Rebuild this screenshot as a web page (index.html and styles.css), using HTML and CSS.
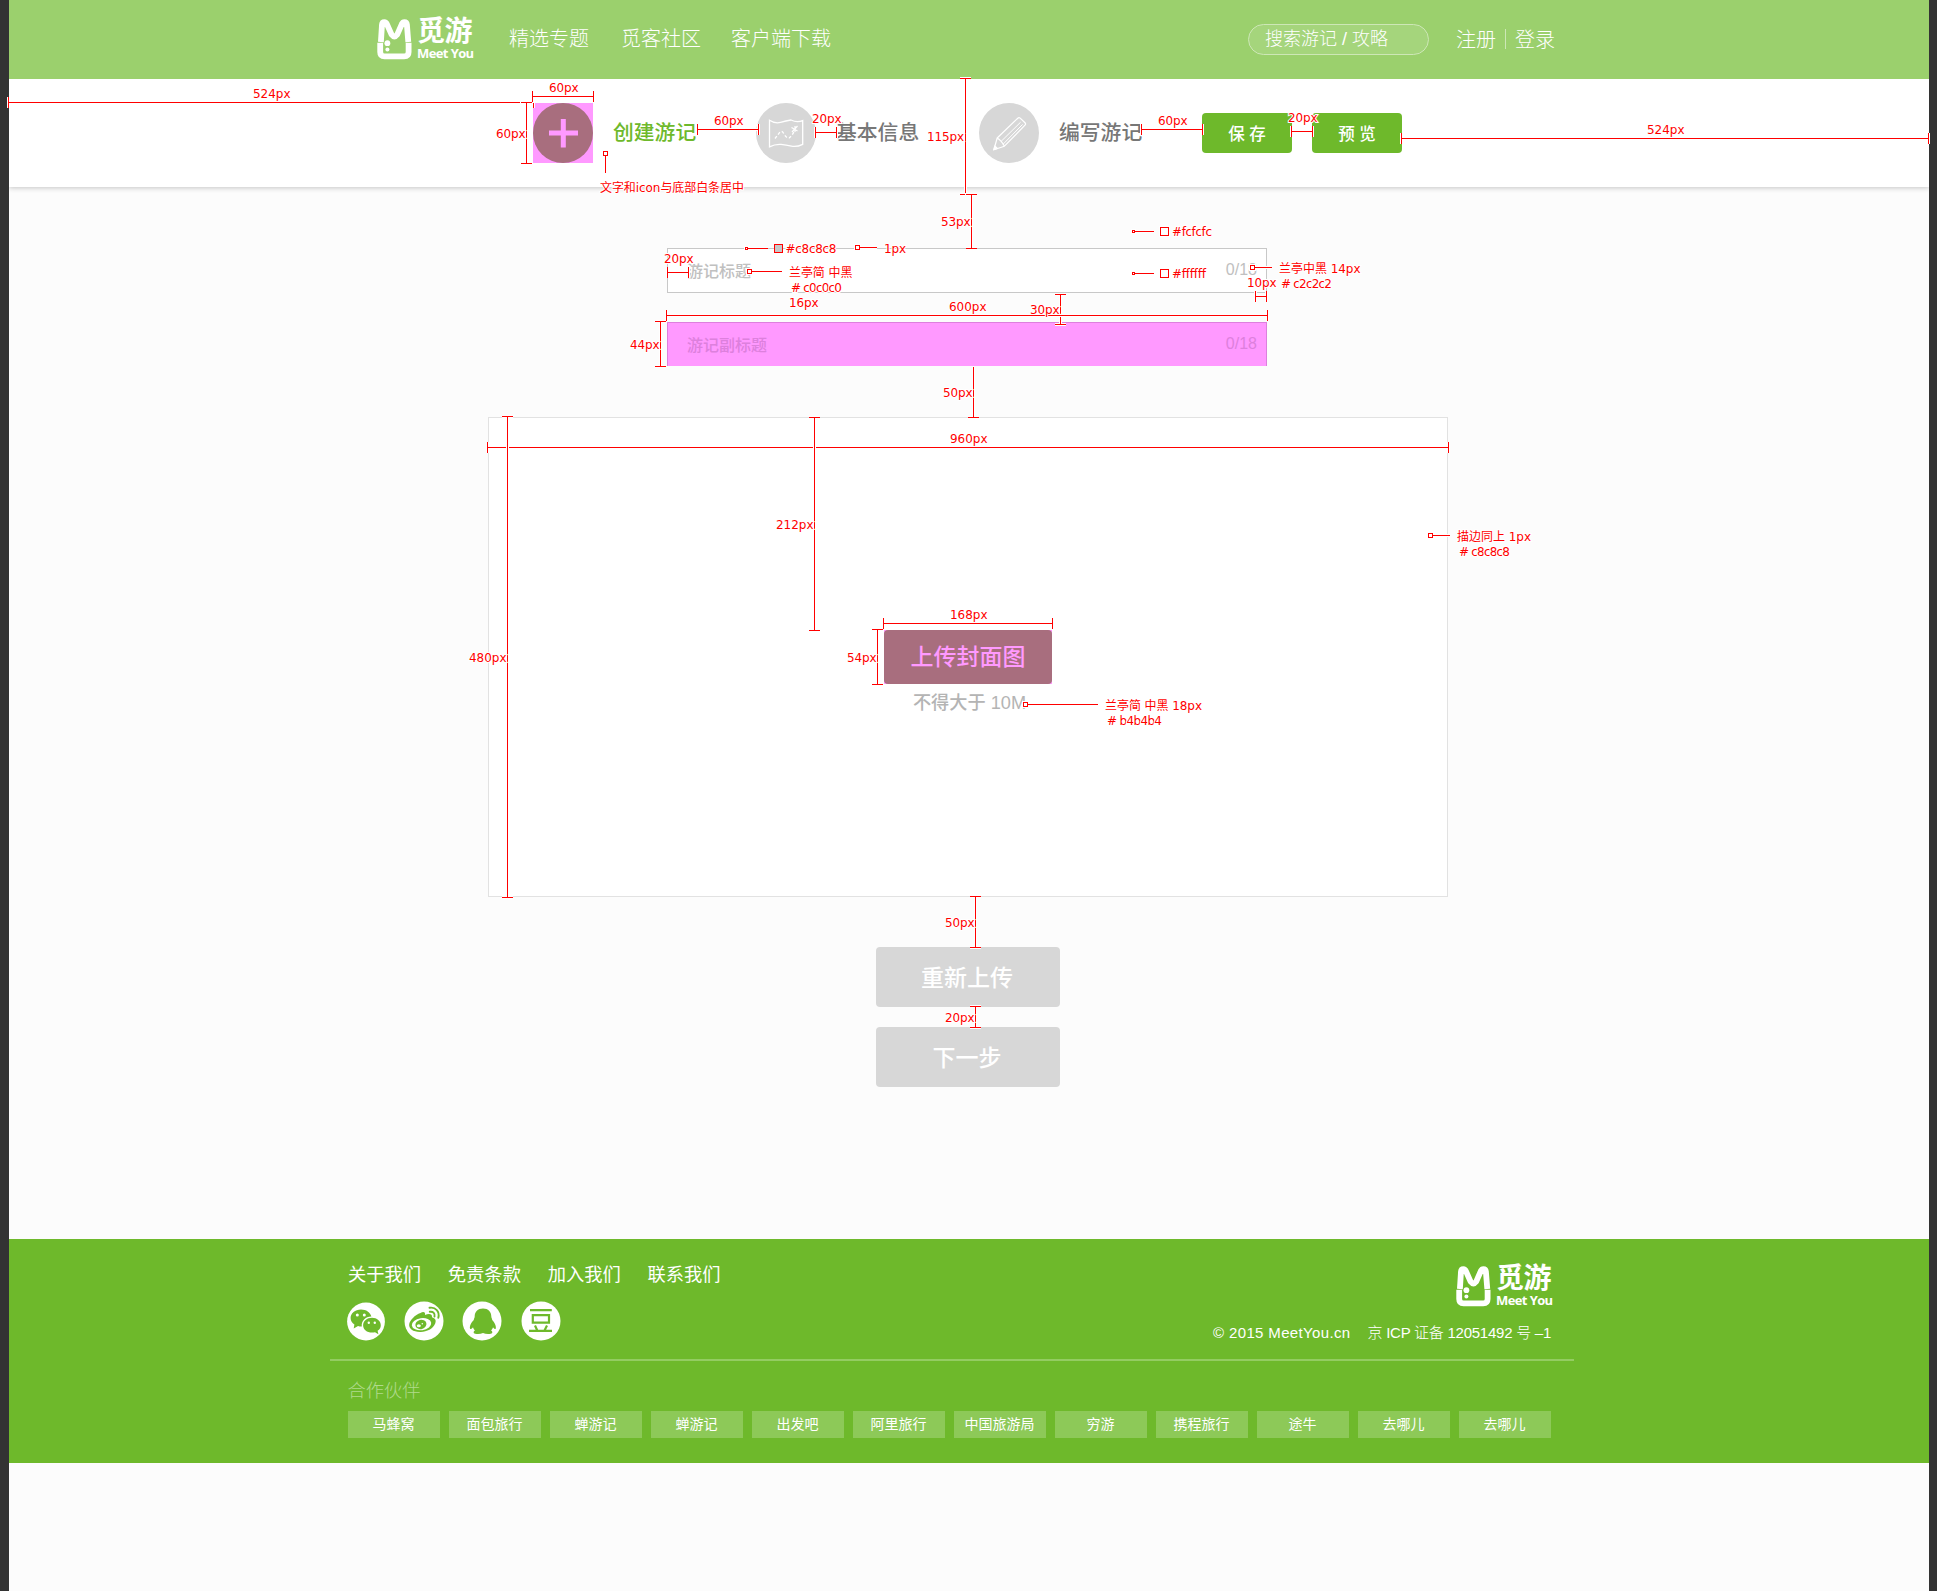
FILE: index.html
```html
<!DOCTYPE html>
<html lang="zh-CN">
<head>
<meta charset="utf-8">
<title>觅游 - 创建游记</title>
<link rel="stylesheet" href="styles.css">
</head>
<body>
<svg class="defs" width="0" height="0">
  <symbol id="logo-mark" viewBox="0 0 35 41">
    <g fill="none" stroke="#fff">
      <path stroke-width="5.8" d="M3.9 23 5 5.5Q5.200 3.100 7.400 3.100 9 3.100 9.800 4.900L14.600 15.600Q17.400 19.400 20.200 15.600L24.900 4.900Q25.800 3.100 27.400 3.100 29.600 3.100 29.900 5.500L31.300 23"/>
      <path stroke-width="5.800" d="M3.200 23.800V33Q3.200 37.400 7.600 37.400H27.200Q31.600 37.400 31.600 33V23.800"/>
    </g>
    <circle cx="10.400" cy="24.200" r="2.900" fill="#fff"/><circle cx="10.400" cy="30.400" r="2" fill="#fff"/>
  </symbol>
</svg>
<div class="page">
  <header class="header">
    <div class="logo">
      <svg width="35" height="41"><use href="#logo-mark"/></svg>
      <div class="logo-words"><span class="logo-cn">觅游</span><span class="logo-en">Meet You</span></div>
    </div>
    <nav class="nav"><a>精选专题</a><a>觅客社区</a><a>客户端下载</a></nav>
    <div class="search">搜索游记 / 攻略</div>
    <div class="account"><a>注册</a><i></i><a>登录</a></div>
  </header>

  <section class="steps">
    <div class="step active">
      <div class="step-icon"><svg width="60" height="60"><circle cx="30" cy="30" r="30" fill="#a86e7e"/><path d="M16 30H45M30.300 16V44.500" stroke="#ff99ff" stroke-width="5"/></svg></div>
      <span>创建游记</span>
    </div>
    <div class="step info">
      <svg width="60" height="60" fill="none" stroke="#fff"><circle cx="30" cy="30" r="30" fill="#d7d7d7" stroke="none"/>
        <path stroke-width="1.300" d="M13.500 17.200Q19 20.800 24.500 19.400T35 17Q41 20 46.700 17.600V41.300Q41 44.200 35.500 43.200T25 41.400Q19 41 13.500 43.800Z"/>
        <path stroke-width="1.300" stroke-dasharray="3 2" d="M19 35.500 24 29Q26 27 28 31T33 35Q36 33 39 27"/>
        <path stroke-width="1.200" d="M35.500 24.500 41.500 28M41.500 23 36 29M39 23V29"/></svg>
      <span>基本信息</span>
    </div>
    <div class="step write">
      <svg width="60" height="60" fill="none" stroke="#fff" stroke-width="1.200" stroke-linejoin="round"><circle cx="30" cy="30" r="30" fill="#d7d7d7" stroke="none"/>
        <path d="M18.200 35 38.800 15.200Q40 14 41.200 15.200L46 19.800Q47.200 21 46 22.200L25.400 43.200 14.800 46.800ZM18.200 35Q22.500 37.500 25.400 43.200"/>
        <path stroke-width="1" d="M22 38.500 41.600 19.200M24 41.300 43.600 21.400"/>
        <path fill="#fff" d="M15.800 43 14.800 46.800 18.400 45.500Z"/></svg>
      <span>编写游记</span>
    </div>
    <div class="actions"><button>保 存</button><button>预 览</button></div>
  </section>

  <main class="editor">
    <div class="field"><span>游记标题</span><em>0/18</em></div>
    <div class="field sub"><span>游记副标题</span><em>0/18</em></div>
    <div class="cover">
      <div class="upload-box"><button class="upload">上传封面图</button></div>
      <p>不得大于 10M</p>
    </div>
    <button class="big">重新上传</button>
    <button class="big">下一步</button>
  </main>

  <footer class="footer">
    <div class="footer-top">
      <div>
        <div class="links"><a>关于我们</a><a>免责条款</a><a>加入我们</a><a>联系我们</a></div>
        <div class="social">
          <svg width="40" height="40" viewBox="0 0 40 40"><circle cx="20" cy="20.500" r="18.900" fill="#fff"/>
            <path fill="#6eb92b" d="M15 8.500C9 8.500 4.600 12.300 4.600 17c0 2.800 1.500 5 3.800 6.600L7.700 27.500l4.300-2.600c1.200.4 2.300.5 3.800.5C15.200 20 19.500 15.400 25.400 15.500 24.300 11.300 20.200 8.500 15 8.500Z"/>
            <path fill="#6eb92b" d="M26 16.800c-5 0-8.900 3.300-8.900 7.400s3.900 7.400 8.900 7.400c1 0 2-.1 3-.4l3.400 2-.8-3.400c2-1.400 3.200-3.300 3.200-5.600 0-4.100-3.900-7.400-8.800-7.400Z"/>
            <g fill="#fff"><circle cx="11.300" cy="14" r="1.500"/><circle cx="18.300" cy="14" r="1.500"/><circle cx="22.800" cy="21.700" r="1.200"/><circle cx="28.800" cy="21.700" r="1.200"/></g></svg>
          <svg width="40" height="40" viewBox="0 0 40 40"><circle cx="20" cy="20" r="19.500" fill="#fff"/>
            <path fill="#6eb92b" d="M16.500 12c2.500-1.800 5.200-1.500 4.500 2 3.500-1.400 7.500-1.500 7 2.300 3.200 1 4.500 3 3.200 6.300-2 5.400-9 8.700-15.200 8.400C9 30.800 4.600 27.500 5.200 23.200 5.700 19.500 11 13.800 16.500 12Z"/>
            <ellipse cx="17.500" cy="23.200" rx="9.800" ry="6" fill="#fff" transform="rotate(-8 17.500 23.200)"/>
            <ellipse cx="16.800" cy="23.400" rx="5.600" ry="4.600" fill="#6eb92b" transform="rotate(-15 17 23)"/>
            <ellipse cx="14.800" cy="24.800" rx="2" ry="1.500" fill="#fff"/><circle cx="18.300" cy="22.800" r=".8" fill="#fff"/>
            <path fill="none" stroke="#6eb92b" stroke-width="1.900" stroke-linecap="round" d="M25.500 6.800C31.500 5.800 36 10.500 34.300 16.800M25.800 10.800C29.200 10.200 31.300 12.600 30.500 15.600"/></svg>
          <svg width="40" height="40" viewBox="0 0 40 40"><circle cx="20" cy="20" r="19.500" fill="#fff"/>
            <path fill="#6eb92b" d="M21 7.500C15.800 7.500 12.600 11 12.700 15.500 12.700 17 11.800 17.500 11.800 19 9.300 21.500 7 25.500 8.200 28c1 .2 2-.8 2.800-1.800.4 1.400 1 2.400 2 3.200-1.700.8-1.900 2.900.2 3.300 2.800.6 5.600.2 7.800-.8 2.200 1 5 1.400 7.800.8 2.100-.4 1.900-2.500.2-3.300 1-.8 1.600-1.800 2-3.200.8 1 1.800 2 2.600 1.800 1.200-2.500-1.100-6.500-3.400-9 0-1.500-.9-2-.9-3.500C29.400 11 26.200 7.500 21 7.500Z"/></svg>
          <svg width="40" height="40" viewBox="0 0 40 40"><circle cx="20" cy="20" r="19.500" fill="#fff"/>
            <path fill="none" stroke="#6eb92b" stroke-width="2.200" d="M9 9.200H30.800M11.800 14.200H28V21.600H11.800ZM8 29.800H31M14 24.500 16.300 29.500M26 24.500 23.500 29.500"/></svg>
        </div>
      </div>
      <div class="footer-right">
        <div class="logo">
          <svg width="35" height="41"><use href="#logo-mark"/></svg>
          <div class="logo-words"><span class="logo-cn">觅游</span><span class="logo-en">Meet You</span></div>
        </div>
        <div class="copyright"><span>© 2015 MeetYou.cn</span><span>京 ICP 证备 12051492 号 –1</span></div>
      </div>
    </div>
    <div class="partners">
      <h4>合作伙伴</h4>
      <div class="tags"><a>马蜂窝</a><a>面包旅行</a><a>蝉游记</a><a>蝉游记</a><a>出发吧</a><a>阿里旅行</a><a>中国旅游局</a><a>穷游</a><a>携程旅行</a><a>途牛</a><a>去哪儿</a><a>去哪儿</a></div>
    </div>
  </footer>
</div>

<!-- Redline layer: dimensions and colour notes over the page -->
<svg class="redlines" width="1937" height="1591">
  <defs>
    <path id="rules" d="
      M8 102.500H520M8.500 97V108
      M532 96.500H594M532.500 91V102M593.500 91V102M533.500 103V108
      M526.500 102V164M521 102.500H532M521 163.500H532
      M605.500 156V173
      M697 129.500H759M697.500 124V135M758.500 124V135
      M815 132.500H837M815.500 127V138M836.500 127V138
      M965.500 78V193M960 78.500H971M960 194.500H965
      M971.500 194V249M966 194.500H977M966 248.500H977
      M1141 129.500H1203M1141.500 124V135M1202.500 124V135
      M1291 131.500H1313M1291.500 126V137M1312.500 126V137
      M1401 138.500H1929M1401.500 133V144M1928.500 133V144
      M1135 231.500H1154M1135 273.500H1154
      M748 248.500H768M860 247.500H877
      M667 272.500H689M667.500 267V278M688.500 267V278
      M752 271.500H782M1255 267.500H1272
      M1255 296.500H1267M1255.500 291V302M1266.500 291V302
      M1060.500 294V314M1060.500 317V325M1055 294.500H1066M1055 324.500H1066
      M666 315.500H1268M666.500 310V321M1267.500 310V321
      M660.500 321V367M655 321.500H666M655 366.500H666
      M973.500 367V418M968 417.500H979
      M487 447.500H506M509 447.500H813M816 447.500H1449M487.500 442V453M1448.500 442V453
      M814.500 417V631M809 417.500H820M809 630.500H820
      M507.500 416V898M502 416.500H513M502 897.500H513
      M1433 535.500H1450
      M883 623.500H1053M883.500 618V629M1052.500 618V629
      M877.500 629V685M872 629.500H883M872 684.500H883
      M1028 704.500H1098
      M975.500 896V948M970 896.500H981M970 947.500H981
      M975.500 1006V1028M970 1006.500H981M970 1027.500H981"/>
    <path id="marks" d="
      M603.500 151.500h4v4h-4zM855.500 245.500h4v4h-4zM747.500 269.500h4v4h-4zM1250.500 265.500h4v4h-4zM1428.500 533.500h4v4h-4zM1023.500 702.500h4v4h-4z
      M1132.500 230.500h2v2h-2zM1132.500 272.500h2v2h-2zM745.500 247.500h2v2h-2z
      M1160.500 227.500h8v8h-8zM1160.500 269.500h8v8h-8z"/>
  </defs>
  <g class="halo"><use href="#rules"/><use href="#marks"/></g>
  <g class="ink"><use href="#rules"/><use href="#marks" fill="#fff"/><path fill="#c8c8c8" d="M774.500 244.500h8v8h-8z"/></g>
  <g class="notes">
    <text x="253" y="98" textLength="37.500">524px</text>
    <text x="549" y="92" textLength="29.500">60px</text>
    <text x="496" y="138" textLength="29.500">60px</text>
    <text x="600" y="192" textLength="144">文字和icon与底部白条居中</text>
    <text x="714" y="125" textLength="29.500">60px</text>
    <text x="812" y="123" textLength="29.500">20px</text>
    <text x="927" y="141" textLength="37">115px</text>
    <text x="941" y="226" textLength="29.500">53px</text>
    <text x="1158" y="125" textLength="29.500">60px</text>
    <text x="1288" y="122" textLength="29.500">20px</text>
    <text x="1647" y="134" textLength="37.500">524px</text>
    <text x="1172" y="236" textLength="40">#fcfcfc</text>
    <text x="1172" y="278" textLength="34">#ffffff</text>
    <text x="785.500" y="253" textLength="51">#c8c8c8</text>
    <text x="884" y="253" textLength="22">1px</text>
    <text x="664" y="263" textLength="29.500">20px</text>
    <text x="789" y="277" textLength="63.500">兰亭简 中黑</text>
    <text x="791" y="292" textLength="51"># c0c0c0</text>
    <text x="789" y="307" textLength="29.500">16px</text>
    <text x="1279" y="273" textLength="81.500">兰亭中黑 14px</text>
    <text x="1281" y="288" textLength="51"># c2c2c2</text>
    <text x="1247" y="287" textLength="29.500">10px</text>
    <text x="1030" y="314" textLength="29.500">30px</text>
    <text x="949" y="311" textLength="37.500">600px</text>
    <text x="630" y="349" textLength="29.500">44px</text>
    <text x="943" y="397" textLength="29.500">50px</text>
    <text x="776" y="529" textLength="37.500">212px</text>
    <text x="950" y="443" textLength="37.500">960px</text>
    <text x="469" y="662" textLength="37.500">480px</text>
    <text x="1457" y="541" textLength="74">描边同上 1px</text>
    <text x="1459" y="556" textLength="51"># c8c8c8</text>
    <text x="950" y="619" textLength="37.500">168px</text>
    <text x="847" y="662" textLength="29.500">54px</text>
    <text x="1105" y="710" textLength="97">兰亭简 中黑 18px</text>
    <text x="1107" y="725" textLength="55"># b4b4b4</text>
    <text x="945" y="927" textLength="29.500">50px</text>
    <text x="945" y="1022" textLength="29.500">20px</text>
  </g>
</svg>
</body>
</html>
```
FILE: styles.css
```css
* { box-sizing: border-box; margin: 0; padding: 0; }
body {
  position: relative;
  width: 1937px;
  height: 1591px;
  padding: 0 8px 0 9px;
  overflow: hidden;
  background: #333;
  font-family: "Liberation Sans", "Noto Sans CJK SC", sans-serif;
}
button { border: 0; font-family: inherit; }
svg { display: block; flex: none; }
i, em { font-style: normal; }
.defs { position: absolute; }
.page { height: 1591px; background: #fcfcfc; }

/* Header */
.header {
  display: flex;
  align-items: center;
  height: 79px;
  padding-left: 368px;
  background: #9bd06d;
  color: #fff;
  font-size: 20px;
  font-weight: 300;
}
.logo { display: flex; gap: 5px; width: 96px; height: 41px; color: #fff; }
.logo-words { display: flex; flex-direction: column; white-space: nowrap; }
.logo-cn { height: 28px; line-height: 26px; font-size: 28px; font-weight: 700; letter-spacing: -.600px; }
.logo-en { font: 700 13px/13px "Open Sans", sans-serif; letter-spacing: -.600px; }
.nav { display: flex; gap: 32px; margin-left: 36px; width: 739px; line-height: 28px; }
.nav a { margin-top: -1px; }
.nav a:nth-child(2) { margin-right: -2px; }
.search {
  width: 181px;
  height: 31px;
  padding-left: 16px;
  border: 1px solid #cde7b6;
  border-radius: 16px;
  background: #a5d57c;
  font-size: 18px;
  line-height: 29px;
}
.account { display: flex; align-items: center; gap: 9px; margin: -2px 0 0 27px; }
.account i { width: 1px; height: 20px; background: #cde7b6; }

/* Step bar */
.steps {
  display: flex;
  align-items: center;
  height: 108px;
  padding-left: 524px;
  background: #fff;
  box-shadow: 0 1px 5px rgba(0, 0, 0, .22);
  clip-path: inset(0 0 -10px 0);
  color: #777;
  font-size: 20.800px;
  font-weight: 500;
}
.step { display: flex; align-items: center; gap: 20px; width: 223px; line-height: 30px; }
.step.active { color: #6eb92b; }
.step-icon { background: #ff99ff; }
.actions { display: flex; gap: 20px; }
.actions button {
  width: 90px;
  height: 40px;
  padding-bottom: 1px;
  border-radius: 4px;
  background: #6eb92b;
  color: #fff;
  font-size: 16.500px;
  font-weight: 500;
}

/* Editor */
.editor { display: flex; flex-direction: column; align-items: center; height: 1052px; padding: 61px 2px 0 0; }
.field {
  display: flex;
  justify-content: space-between;
  align-items: center;
  width: 600px;
  height: 45px;
  margin-right: 2px;
  padding: 0 9px 2px 19px;
  border: 1px solid #c8c8c8;
  background: #fff;
  color: #c0c0c0;
  font-size: 16px;
}
.field span { font-weight: 500; }
.field.sub { height: 44px; margin-top: 29px; border-color: #dd80dd; border-bottom: 0; background: #ff99ff; color: #dd80dd; }
.cover {
  display: flex;
  flex-direction: column;
  align-items: center;
  width: 960px;
  height: 480px;
  margin: 51px 0 50px;
  padding-top: 212px;
  border: 1px solid #e2e2e2;
  background: #fff;
}
.upload-box { background: #ff99ff; }
.upload {
  display: block;
  width: 168px;
  height: 54px;
  padding-bottom: 4px;
  border-radius: 4px;
  background: #a86e7e;
  color: #ff99ff;
  font-size: 23px;
  font-weight: 500;
}
.cover p { margin-top: 6px; margin-left: 3px; color: #b4b4b4; font-size: 18.200px; font-weight: 500; line-height: 26px; }
.big {
  width: 184px;
  height: 60px;
  margin-bottom: 20px;
  padding: 0 2px 3px 0;
  border-radius: 4px;
  background: #d7d7d7;
  color: #fff;
  font-size: 23px;
  font-weight: 500;
}

/* Footer */
.footer { height: 224px; padding: 0 355px 0 321px; background: #6eb92b; color: #fff; }
.footer-top {
  display: flex;
  justify-content: space-between;
  height: 122px;
  padding: 22px 23px 0 18px;
  border-bottom: 2px solid #94cc62;
}
.links { display: flex; gap: 26.700px; padding-top: 1px; font-size: 18.300px; line-height: 26px; }
.social { display: flex; gap: 18.200px; margin: 13px 0 0 -2px; }
.footer-right { display: flex; flex-direction: column; align-items: flex-end; padding-top: 5px; }
.footer-right .logo { margin-right: -1px; }
.copyright { display: flex; gap: 17px; margin-top: 15px; font-size: 15px; line-height: 22px; font-weight: 300; white-space: nowrap; }
.copyright span { letter-spacing: .350px; }
.copyright span + span { letter-spacing: -.250px; }
.partners { padding: 17px 0 0 17.500px; }
.partners h4 { height: 33px; color: #b0da8c; font-size: 18.300px; font-weight: 300; line-height: 26px; }
.tags { display: flex; gap: 9px; }
.tags a { width: 92px; height: 27px; background: #8dc958; font-size: 14px; line-height: 26px; text-align: center; }

/* Redlines */
.redlines { position: absolute; left: 0; top: 0; }
.halo { fill: none; stroke: #fff; stroke-width: 3px; shape-rendering: crispEdges; }
.ink { fill: none; stroke: #f00; stroke-width: 1px; shape-rendering: crispEdges; }
.notes { fill: #f00; stroke: #fff; stroke-width: 2px; paint-order: stroke; font: 12px "DejaVu Sans", "Noto Sans CJK SC", sans-serif; }
```
